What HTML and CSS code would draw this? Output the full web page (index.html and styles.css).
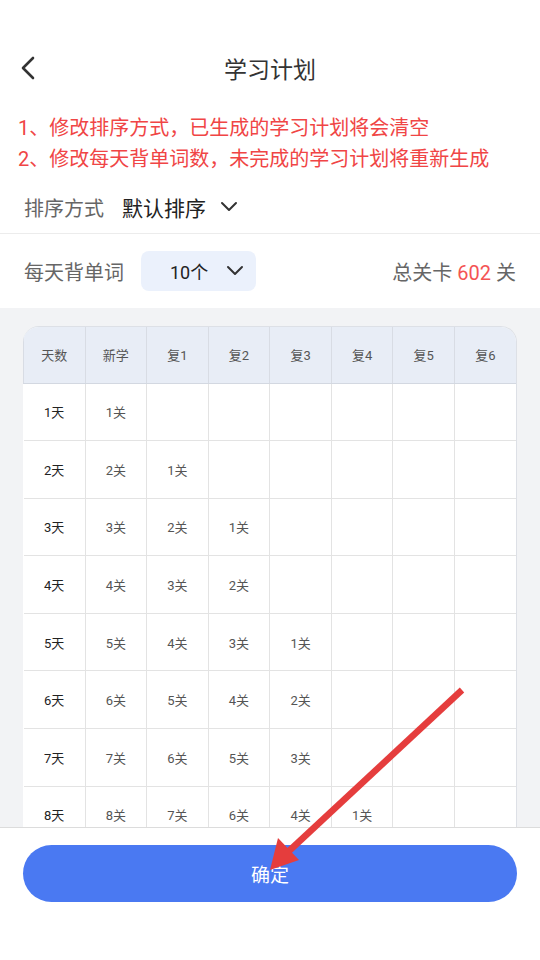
FILE: index.html
```html
<!DOCTYPE html>
<html lang="zh-CN">
<head>
<meta charset="UTF-8">
<title>学习计划</title>
<link rel="stylesheet" href="styles.css">
</head>
<body>
<div class="page">
    <div class="nav">
        <span class="back">
            <svg width="16" height="24" viewBox="0 0 16 24"><path d="M13 2 L3 12 L13 22" fill="none" stroke="#333" stroke-width="2.6" stroke-linecap="round" stroke-linejoin="round"/></svg>
        </span>
        <h1>学习计划</h1>
    </div>
    <div class="notes">
        <p>1、修改排序方式，已生成的学习计划将会清空</p>
        <p>2、修改每天背单词数，未完成的学习计划将重新生成</p>
    </div>
    <div class="row sort-row">
        <span class="label">排序方式</span>
        <span class="value">默认排序</span>
        <svg class="chev" width="18" height="12" viewBox="0 0 18 12"><path d="M2 2 L9 9 L16 2" fill="none" stroke="#333" stroke-width="2" stroke-linecap="round" stroke-linejoin="round"/></svg>
    </div>
    <div class="row count-row">
        <span class="label">每天背单词</span>
        <div class="picker">
            <span>10个</span>
            <svg width="18" height="12" viewBox="0 0 18 12"><path d="M2 2 L9 9 L16 2" fill="none" stroke="#333" stroke-width="2" stroke-linecap="round" stroke-linejoin="round"/></svg>
        </div>
        <span class="total">总关卡 <em>602</em> 关</span>
    </div>
    <div class="plan">
        <div class="table-wrap">
            <table>
                <thead>
                    <tr><th>天数</th><th>新学</th><th>复1</th><th>复2</th><th>复3</th><th>复4</th><th>复5</th><th>复6</th></tr>
                </thead>
                <tbody>
                    <tr><td class="day">1天</td><td>1关</td><td></td><td></td><td></td><td></td><td></td><td></td></tr>
                    <tr><td class="day">2天</td><td>2关</td><td>1关</td><td></td><td></td><td></td><td></td><td></td></tr>
                    <tr><td class="day">3天</td><td>3关</td><td>2关</td><td>1关</td><td></td><td></td><td></td><td></td></tr>
                    <tr><td class="day">4天</td><td>4关</td><td>3关</td><td>2关</td><td></td><td></td><td></td><td></td></tr>
                    <tr><td class="day">5天</td><td>5关</td><td>4关</td><td>3关</td><td>1关</td><td></td><td></td><td></td></tr>
                    <tr><td class="day">6天</td><td>6关</td><td>5关</td><td>4关</td><td>2关</td><td></td><td></td><td></td></tr>
                    <tr><td class="day">7天</td><td>7关</td><td>6关</td><td>5关</td><td>3关</td><td></td><td></td><td></td></tr>
                    <tr><td class="day">8天</td><td>8关</td><td>7关</td><td>6关</td><td>4关</td><td>1关</td><td></td><td></td></tr>
                </tbody>
            </table>
        </div>
    </div>
    <div class="footer">
        <button class="confirm">确定</button>
    </div>
</div>
<svg class="arrow" width="540" height="960" viewBox="0 0 540 960">
    <line x1="462" y1="690" x2="289" y2="851" stroke="#e53d3d" stroke-width="6.5"/>
    <polygon points="270,870 278,838 299,860" fill="#e53d3d"/>
</svg>
</body>
</html>
```

FILE: styles.css
```css
* {
    box-sizing: border-box;
}
body {
    margin: 0;
    background: #fff;
    font-family: Roboto, "Noto Sans CJK SC", sans-serif;
    color: #333;
}
.page {
    width: 540px;
    height: 960px;
    display: flex;
    flex-direction: column;
    overflow: hidden;
}
.nav {
    height: 48px;
    margin-top: 44px;
    display: flex;
    align-items: center;
    justify-content: center;
    position: relative;
}
.nav h1 {
    margin: 0;
    font-size: 23px;
    font-weight: 400;
    color: #333;
}
.back {
    position: absolute;
    left: 20px;
    top: 12px;
    display: flex;
}
.notes {
    padding: 21px 18px 0;
}
.notes p {
    margin: 0;
    font-size: 20px;
    line-height: 31px;
    color: #f04545;
}
.row {
    display: flex;
    align-items: center;
    padding: 0 24px;
}
.sort-row {
    height: 59px;
    padding-top: 6px;
    border-bottom: 1px solid #ececec;
}
.label {
    font-size: 20px;
    color: #666;
}
.sort-row .value {
    font-size: 21px;
    color: #222;
    margin-left: 18px;
}
.sort-row .chev {
    margin-left: 14px;
}
.count-row {
    height: 74px;
}
.picker {
    width: 115px;
    height: 40px;
    margin-left: 17px;
    background: #ebf1fc;
    border-radius: 8px;
    display: flex;
    align-items: center;
    justify-content: space-between;
    padding: 0 12px 0 29px;
    font-size: 18px;
    color: #222;
}
.total {
    margin-left: auto;
    font-size: 20px;
    color: #666;
}
.total em {
    font-style: normal;
    color: #f45454;
}
.plan {
    flex: 1;
    background: #f2f3f5;
    padding: 18px 23px 0 23px;
    overflow: hidden;
}
.table-wrap {
    background: #fff;
    border: 1px solid #dde0e6;
    border-left: none;
    border-bottom: none;
    border-radius: 16px 16px 0 0;
    overflow: hidden;
}
table {
    width: 100%;
    border-collapse: collapse;
    table-layout: fixed;
    font-size: 13px;
}
th {
    height: 56px;
    background: #e8edf6;
    font-weight: 400;
    color: #555;
    border-right: 1px solid #d8dce4;
    border-bottom: 1px solid #d3d8e1;
}
th:first-child {
    border-left: 1px solid #d8dce4;
}
th:last-child, td:last-child {
    border-right: none;
}
td {
    height: 57.6px;
    text-align: center;
    color: #555;
    border-right: 1px solid #e3e3e3;
    border-bottom: 1px solid #e3e3e3;
}
td.day {
    color: #222;
}
.footer {
    height: 133px;
    border-top: 1px solid #dcdcdc;
    padding: 17px 23px 0;
    background: #fff;
}
.confirm {
    width: 100%;
    height: 57px;
    border: none;
    border-radius: 29px;
    background: #4a79f2;
    color: #fff;
    font-family: Roboto, "Noto Sans CJK SC", sans-serif;
    font-size: 19px;
}
.arrow {
    position: absolute;
    left: 0;
    top: 0;
    pointer-events: none;
}
```
